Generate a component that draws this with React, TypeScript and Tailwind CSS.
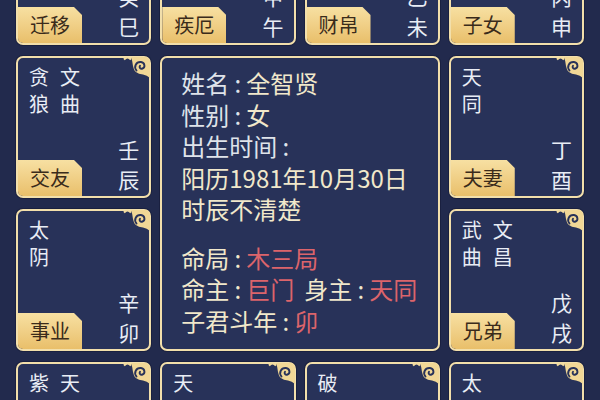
import React from "react";

type Palace = { stars: string[][]; stem: string; br: string; label: string };

const palaces: Palace[] = [
  { stars: [["巨", "门"]], stem: "癸", br: "巳", label: "迁移" },
  { stars: [["廉", "贞"], ["天", "相"]], stem: "甲", br: "午", label: "疾厄" },
  { stars: [["天", "梁"]], stem: "乙", br: "未", label: "财帛" },
  { stars: [["七", "杀"]], stem: "丙", br: "申", label: "子女" },
  { stars: [["贪", "狼"], ["文", "曲"]], stem: "壬", br: "辰", label: "交友" },
  { stars: [["天", "同"]], stem: "丁", br: "酉", label: "夫妻" },
  { stars: [["太", "阴"]], stem: "辛", br: "卯", label: "事业" },
  { stars: [["武", "曲"], ["文", "昌"]], stem: "戊", br: "戌", label: "兄弟" },
  { stars: [["紫", "微"], ["天", "府"]], stem: "庚", br: "寅", label: "田宅" },
  { stars: [["天", "机"]], stem: "辛", br: "丑", label: "福德" },
  { stars: [["破", "军"]], stem: "庚", br: "子", label: "父母" },
  { stars: [["太", "阳"]], stem: "己", br: "亥", label: "命宫" },
];

function Ornament() {
  return (
    <svg
      className="absolute top-[-2px] right-[-2px]"
      width="30"
      height="26"
      viewBox="0 0 30 26"
    >
      <path d="M3 3.5 Q6.5 -0.5 10 3.5" stroke="#f3dca0" strokeWidth="2" fill="none" />
      <path
        d="M10 1 L24 1 Q29 1 29 6 L29 22 Q26 19 22 18.5 Q13 18 12 10 Q11.5 5 10 1 Z"
        fill="#f1d796"
      />
      <path
        d="M15.5 14.5 C12.5 11 15 5.5 20 6 C24 6.5 24.5 11.5 21.5 12.5 C19.5 13.2 17.8 11.5 19 9.8"
        stroke="#283259"
        strokeWidth="1.9"
        fill="none"
        strokeLinecap="round"
      />
    </svg>
  );
}

function PalaceBox({ p }: { p: Palace }) {
  return (
    <div className="relative flex flex-col rounded-[7px] border-2 border-[#f2dfab] bg-[#283259] shadow-[0_0_0_1px_#1a2040]">
      <Ornament />
      <div className="flex gap-[11px] pl-[11px] pt-[5px] text-[20px] leading-[27px] text-[#e9edf5]">
        {p.stars.map((col, i) => (
          <div key={i} className="flex flex-col">
            {col.map((c, j) => (
              <span key={j}>{c}</span>
            ))}
          </div>
        ))}
      </div>
      <div className="flex-1" />
      <div className="flex items-end justify-between">
        <div className="flex h-[36px] w-[64px] items-center justify-center rounded-bl-[5px] bg-gradient-to-b from-[#f7e0a2] to-[#e9bf6a] text-[20px] text-[#3a2b1b] [clip-path:polygon(0_0,calc(100%-8px)_0,100%_8px,100%_100%,0_100%)]">
          {p.label}
        </div>
        <div className="flex flex-col pb-[2px] pr-[10px] text-[21px] leading-[30px] text-[#e9edf5]">
          <span>{p.stem}</span>
          <span>{p.br}</span>
        </div>
      </div>
    </div>
  );
}

const L = "text-[#dfe3ea]";
const V = "text-[#f1e8cb]";
const R = "text-[#dc646b]";

function Colon({ c }: { c: string }) {
  return <span className={"inline-block w-[17px] text-center " + c}>:</span>;
}

function Center() {
  return (
    <div className="col-span-2 col-start-2 row-span-2 row-start-2 rounded-[7px] border-2 border-[#f2dfab] bg-[#283259] pl-[19px] pt-[9px] text-[24px] leading-[31.5px] shadow-[0_0_0_1px_#1a2040]">
      <div>
        <span className={L}>姓名</span>
        <Colon c={L} />
        <span className={V}>全智贤</span>
      </div>
      <div>
        <span className={L}>性别</span>
        <Colon c={L} />
        <span className={V}>女</span>
      </div>
      <div>
        <span className={L}>出生时间</span>
        <Colon c={L} />
      </div>
      <div className={V}>阳历1981年10月30日</div>
      <div className={V}>时辰不清楚</div>
      <div className="mt-[17px]">
        <span className={V}>命局</span>
        <Colon c={V} />
        <span className={R}>木三局</span>
      </div>
      <div>
        <span className={V}>命主</span>
        <Colon c={V} />
        <span className={R}>巨门</span>
        <span className="inline-block w-[10px]" />
        <span className={V}>身主</span>
        <Colon c={V} />
        <span className={R}>天同</span>
      </div>
      <div>
        <span className={V}>子君斗年</span>
        <Colon c={V} />
        <span className={R}>卯</span>
      </div>
    </div>
  );
}

export default function App() {
  return (
    <div className="h-[400px] w-[600px] overflow-hidden bg-[#222a4d] font-['Noto_Sans_CJK_SC',sans-serif]">
      <div className="mt-[-97px] grid grid-cols-4 grid-rows-[142px_142px_142px_142px] gap-x-[9px] gap-y-[11px] px-[16px]">
        <Center />
        {palaces.map((p, i) => (
          <PalaceBox key={i} p={p} />
        ))}
      </div>
    </div>
  );
}
